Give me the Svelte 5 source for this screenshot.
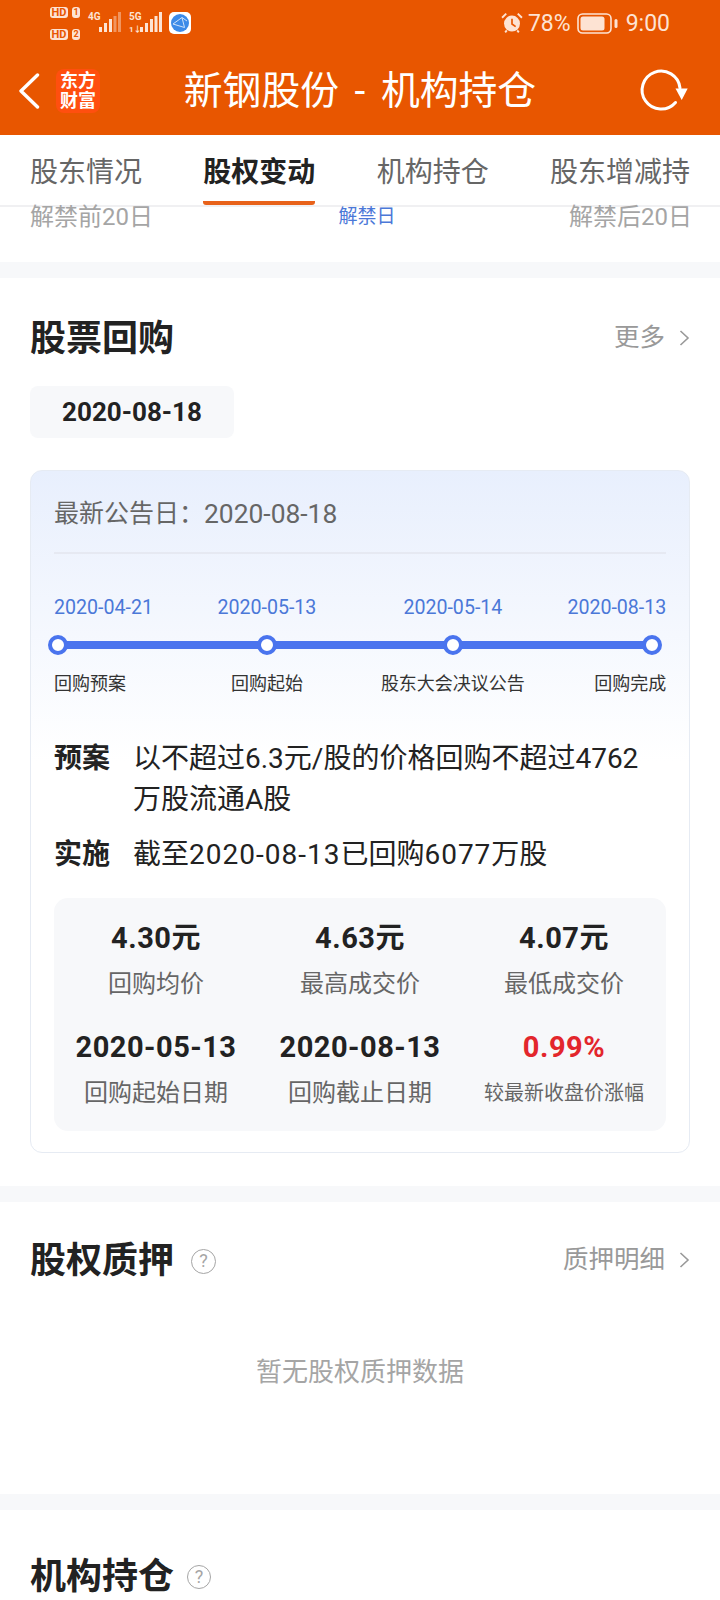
<script>
  const tabs = [
    { label: '股东情况' },
    { label: '股权变动', active: true },
    { label: '机构持仓' },
    { label: '股东增减持' }
  ]

  const stops = [
    { date: '2020-04-21', label: '回购预案', cls: 'first' },
    { date: '2020-05-13', label: '回购起始', cls: '' },
    { date: '2020-05-14', label: '股东大会决议公告', cls: '' },
    { date: '2020-08-13', label: '回购完成', cls: 'last' }
  ]

  const stats = [
    { value: '4.30元', label: '回购均价' },
    { value: '4.63元', label: '最高成交价' },
    { value: '4.07元', label: '最低成交价' },
    { value: '2020-05-13', label: '回购起始日期' },
    { value: '2020-08-13', label: '回购截止日期' },
    { value: '0.99%', label: '较最新收盘价涨幅', up: true }
  ]
</script>

{#snippet chevron()}
  <svg class="chev" width="11" height="18" viewBox="0 0 11 18" aria-hidden="true">
    <path d="M1.5 2 L9 9 L1.5 16" fill="none" stroke="#999" stroke-width="1.6" />
  </svg>
{/snippet}

{#snippet help(size)}
  <span class="help" style="width:{size}px;height:{size}px">?</span>
{/snippet}

<div class="page">
  <header class="top">
    <div class="status">
      <div class="sims">
        <div class="sim"><span class="hd">HD</span><span class="num">1</span></div>
        <div class="sim"><span class="hd">HD</span><span class="num">2</span></div>
      </div>
      <div class="net net4">
        <span class="gen">4G</span>
        <svg width="22" height="21" viewBox="0 0 22 21" aria-hidden="true">
          <rect x="0" y="15" width="3" height="5" fill="#fde3d3" />
          <rect x="5" y="11" width="3" height="9" fill="#fde3d3" />
          <rect x="10" y="7" width="3" height="13" fill="#fde3d3" />
          <rect x="14.5" y="4" width="3" height="16" fill="#fde3d3" opacity=".45" />
          <rect x="19" y="0" width="3" height="20" fill="#fde3d3" opacity=".45" />
        </svg>
      </div>
      <div class="net net5">
        <div class="gen-col">
          <span class="gen">5G</span>
          <span class="arrows">1↓</span>
        </div>
        <svg width="22" height="21" viewBox="0 0 22 21" aria-hidden="true">
          <rect x="0" y="15" width="3" height="5" fill="#fde3d3" />
          <rect x="5" y="11" width="3" height="9" fill="#fde3d3" />
          <rect x="10" y="7" width="3" height="13" fill="#fde3d3" />
          <rect x="14.5" y="4" width="3" height="16" fill="#fde3d3" />
          <rect x="19" y="0" width="3" height="20" fill="#fde3d3" />
        </svg>
      </div>
      <svg class="app" width="22" height="22" viewBox="0 0 22 22" aria-hidden="true">
        <rect width="22" height="22" rx="5" fill="#fff" />
        <circle cx="11" cy="11" r="9" fill="#3d8be8" />
        <path d="M4 12 L13 5.5 L15.5 15.5 Z M13 5.5 L18 9" fill="none" stroke="#cfe3fa" stroke-width="1" />
      </svg>
      <div class="spacer"></div>
      <svg class="alarm" width="22" height="22" viewBox="0 0 21 21" aria-hidden="true">
        <circle cx="10.5" cy="11" r="7.6" fill="#fde3d3" />
        <path d="M10.5 6.5 V11.5 L14 14" fill="none" stroke="#e85600" stroke-width="1.6" />
        <path d="M1 5.5 L5 1.5 M20 5.5 L16 1.5 M4 19.5 L5.5 17.5 M17 19.5 L15.5 17.5" stroke="#fde3d3" stroke-width="1.8" fill="none" />
      </svg>
      <span class="pct">78%</span>
      <svg class="batt" width="41" height="21" viewBox="0 0 41 21" aria-hidden="true">
        <rect x="1" y="1" width="33" height="19" rx="4.5" fill="none" stroke="#fde3d3" stroke-width="1.6" />
        <rect x="3.5" y="3.5" width="24" height="14" rx="2.5" fill="#fde3d3" />
        <rect x="37.5" y="6" width="3" height="9" rx="1.5" fill="#fde3d3" />
      </svg>
      <span class="clock">9:00</span>
    </div>

    <nav class="nav">
      <svg class="back" width="22" height="36" viewBox="0 0 22 36" aria-hidden="true">
        <path d="M19.5 2 L3 18 L19.5 34" fill="none" stroke="#fff" stroke-width="3.4" stroke-linecap="round" stroke-linejoin="round" />
      </svg>
      <div class="logo"><span>东方</span><span>财富</span></div>
      <h1 class="title">新钢股份 - 机构持仓</h1>
      <svg class="refresh" width="60" height="60" viewBox="0 0 60 60" aria-hidden="true">
        <path d="M45.5 41.5 A19 19 0 1 1 50 27" fill="none" stroke="#fff" stroke-width="3" stroke-linecap="round" />
        <path d="M45.5 27.5 H57.7 L51.7 39 Z" fill="#fff" />
      </svg>
    </nav>
  </header>

  <div class="tabs">
    {#each tabs as tab}
      <div class="tab" class:active={tab.active}>{tab.label}</div>
    {/each}
  </div>

  <section class="unlock">
    <span>解禁前20日</span>
    <span class="mid">解禁日</span>
    <span>解禁后20日</span>
  </section>

  <div class="band"></div>

  <section class="block buyback">
    <div class="head">
      <h2>股票回购</h2>
      <div class="more">更多{@render chevron()}</div>
    </div>
    <div class="pill">2020-08-18</div>

    <div class="card">
      <div class="notice">
        <span>最新公告日：</span><span class="notice-date">2020-08-18</span>
      </div>

      <div class="timeline">
        {#each stops as stop}
          <div class="stop {stop.cls}">
            <span class="date">{stop.date}</span>
            <span class="dot"></span>
            <span class="label">{stop.label}</span>
          </div>
        {/each}
      </div>

      <dl class="plan">
        <dt>预案</dt>
        <dd>以不超过6.3元/股的价格回购不超过4762<br />万股流通A股</dd>
        <dt>实施</dt>
        <dd>截至<span class="wide">2020-08-13</span>已回购<span class="wide">6077</span>万股</dd>
      </dl>

      <div class="stats">
        {#each stats as s}
          <div class="stat">
            <b class:up={s.up}>{s.value}</b>
            <span class:small={s.up}>{s.label}</span>
          </div>
        {/each}
      </div>
    </div>
  </section>

  <div class="band"></div>

  <section class="block pledge">
    <div class="head">
      <h2>股权质押{@render help(25)}</h2>
      <div class="more">质押明细{@render chevron()}</div>
    </div>
    <p class="empty">暂无股权质押数据</p>
  </section>

  <div class="band"></div>

  <section class="block holders">
    <div class="head">
      <h2>机构持仓{@render help(24)}</h2>
    </div>
  </section>
</div>

<style>
  :global(body) {
    margin: 0;
    background: #fff;
  }

  .page {
    height: 1600px;
    overflow: hidden;
    font-family: Roboto, "Noto Sans CJK SC", sans-serif;
    color: #222;
  }

  .top {
    height: 135px;
    background: #e85600;
    display: flex;
    flex-direction: column;
  }

  .status {
    height: 46px;
    display: flex;
    align-items: flex-start;
    padding: 0 50px;
    color: #fde3d3;
  }
  .sims {
    display: flex;
    flex-direction: column;
    gap: 11px;
    padding-top: 7px;
  }
  .sim {
    display: flex;
    gap: 4px;
  }
  .hd, .num {
    height: 11px;
    border-radius: 3px;
    background: #fde3d3;
    color: #e85600;
    font-size: 11px;
    font-weight: 700;
    line-height: 11px;
    text-align: center;
  }
  .hd { width: 18px; }
  .num { width: 8px; font-size: 9px; }

  .net {
    display: flex;
    align-items: flex-end;
    height: 33px;
  }
  .net4 { margin-left: 8px; }
  .net5 { margin-left: 8px; }
  .net4 .gen { align-self: flex-start; margin-top: 12px; margin-right: 0; }
  .gen {
    font-size: 10px;
    font-weight: 700;
    line-height: 10px;
    width: 11px;
    white-space: nowrap;
  }
  .gen-col {
    display: flex;
    flex-direction: column;
    height: 21px;
    justify-content: space-between;
    width: 11px;
  }
  .arrows {
    font-size: 8px;
    font-weight: 700;
    line-height: 7px;
    white-space: nowrap;
  }
  .app { margin: 12px 0 0 7px; }
  .spacer { flex: 1; }
  .alarm { margin: 12px 5px 0 0; }
  .pct, .clock {
    font-size: 23px;
    line-height: 27px;
    margin-top: 10px;
    white-space: nowrap;
  }
  .batt { margin: 13px 8px 0 6px; }

  .nav {
    flex: 1;
    display: flex;
    align-items: center;
    position: relative;
    padding-left: 18px;
  }
  .logo {
    margin-left: 16px;
    width: 44px;
    height: 44px;
    border-radius: 8px;
    background: #ff4f0f;
    color: #fff;
    font-size: 18px;
    font-weight: 700;
    line-height: 20px;
    display: flex;
    flex-direction: column;
    align-items: center;
    justify-content: center;
  }
  .logo span { display: block; }
  .title {
    margin: 0;
    position: absolute;
    left: 0;
    right: 0;
    text-align: center;
    color: #fff;
    font-size: 38.8px;
    font-weight: 400;
    line-height: 48px;
    word-spacing: 6px;
    white-space: pre;
  }
  .refresh {
    margin-left: auto;
    margin-right: 30px;
  }

  .tabs {
    height: 72px;
    box-sizing: border-box;
    border-bottom: 2px solid #f0f0f2;
    padding: 0 30px;
    display: flex;
    justify-content: space-between;
    background: #fff;
  }
  .tab {
    height: 70px;
    box-sizing: border-box;
    padding-top: 20px;
    font-size: 28px;
    line-height: 36px;
    color: #666;
    border-bottom: 4px solid transparent;
  }
  .tab.active {
    color: #222;
    font-weight: 700;
    border-bottom-color: #e8621a;
    border-radius: 0 0 3px 3px;
  }

  .unlock {
    height: 55px;
    padding: 0 28px 0 30px;
    display: flex;
    justify-content: space-between;
    font-size: 24px;
    line-height: 20px;
    color: #a5a5a5;
  }
  .unlock .mid {
    font-size: 19px;
    color: #4b78d8;
    margin-left: 12px;
  }

  .band {
    height: 16px;
    background: #f7f8fa;
  }

  .block { padding: 0 30px; }

  .head {
    display: flex;
    justify-content: space-between;
    align-items: center;
  }
  h2 {
    margin: 0;
    font-size: 36px;
    font-weight: 700;
    line-height: 46px;
    color: #222;
    display: flex;
    align-items: center;
  }
  .more {
    padding-bottom: 5px;
    font-size: 25.5px;
    line-height: 32px;
    color: #999;
    display: flex;
    align-items: center;
  }
  .chev { margin-left: 14px; margin-top: 3px; }

  .help {
    margin-left: 17px;
    box-sizing: border-box;
    border: 1.5px solid #a5a5a5;
    border-radius: 50%;
    color: #a5a5a5;
    font-size: 18px;
    font-weight: 400;
    line-height: 1;
    display: flex;
    align-items: center;
    justify-content: center;
  }

  .buyback { padding-top: 38px; height: 908px; box-sizing: border-box; }
  .pledge { padding-top: 36px; height: 292px; box-sizing: border-box; }
  .holders { padding-top: 44px; }
  .holders .help { margin-left: 13px; }

  .pill {
    margin-top: 24px;
    width: 204px;
    height: 52px;
    border-radius: 8px;
    background: #f7f8fa;
    font-size: 26px;
    font-weight: 700;
    line-height: 52px;
    text-align: center;
  }

  .card {
    margin-top: 32px;
    height: 683px;
    box-sizing: border-box;
    border: 1px solid #e6ebf3;
    border-radius: 12px;
    background: linear-gradient(180deg, #e8effd 0, #ffffff 290px);
    padding: 0 23px;
  }

  .notice {
    height: 83px;
    box-sizing: border-box;
    padding-top: 26px;
    border-bottom: 2px solid #e6e9f2;
    font-size: 25px;
    line-height: 34px;
    color: #666;
    display: flex;
  }
  .notice-date { font-size: 26.4px; }

  .timeline {
    position: relative;
    margin-top: 42px;
    display: flex;
    gap: 64.5px;
  }
  .timeline::before {
    content: "";
    position: absolute;
    left: 4px;
    right: 14px;
    top: 45px;
    height: 8px;
    background: #4a74ee;
  }
  .stop {
    position: relative;
    display: flex;
    flex-direction: column;
    align-items: center;
  }
  .stop.first { align-items: flex-start; }
  .stop.last { align-items: flex-end; margin-left: -22px; }
  .date {
    font-size: 19.6px;
    line-height: 24px;
    color: #4b78d8;
    white-space: nowrap;
  }
  .dot {
    margin-top: 15px;
    width: 20px;
    height: 20px;
    box-sizing: border-box;
    border: 4.5px solid #4a74ee;
    border-radius: 50%;
    background: #fff;
  }
  .first .dot { margin-left: -6px; }
  .last .dot { margin-right: 4px; }
  .label {
    margin-top: 15px;
    font-size: 18px;
    line-height: 28px;
    color: #333;
    white-space: nowrap;
  }

  .plan {
    margin: 40px 0 0;
    display: grid;
    grid-template-columns: 79px 1fr;
    row-gap: 14px;
    font-size: 28px;
    line-height: 41px;
  }
  .plan dt { font-weight: 700; }
  .plan dd { margin: 0; white-space: nowrap; color: #222; }
  .wide { letter-spacing: 1px; }

  .stats {
    margin-top: 23px;
    height: 233px;
    box-sizing: border-box;
    padding-top: 21px;
    border-radius: 14px;
    background: #f7f8fa;
    display: grid;
    grid-template-columns: repeat(3, 1fr);
    grid-auto-rows: 109px;
  }
  .stat {
    display: flex;
    flex-direction: column;
    align-items: center;
  }
  .stat b {
    font-size: 29px;
    letter-spacing: 0.5px;
    line-height: 38px;
    color: #222;
  }
  .stat b.up { color: #e3262c; }
  .stat span {
    margin-top: 10.5px;
    font-size: 24px;
    line-height: 32px;
    color: #666;
    white-space: nowrap;
  }
  .stat span.small { font-size: 20px; }

  .empty {
    margin: 70px 0 0;
    text-align: center;
    font-size: 26px;
    line-height: 36px;
    color: #a5a5a5;
  }
</style>
